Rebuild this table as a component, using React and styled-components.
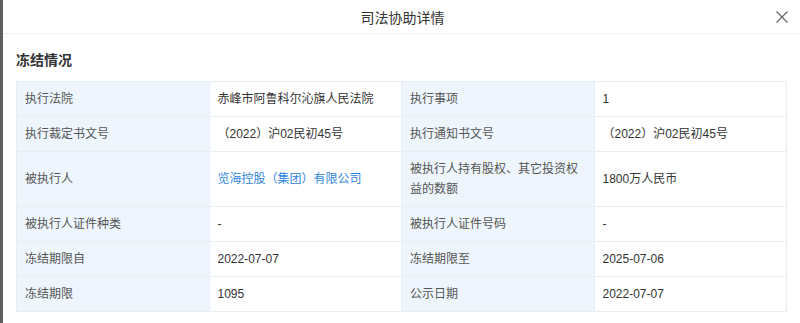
import React from "react";
import styled, { createGlobalStyle } from "styled-components";

const Global = createGlobalStyle`
  html, body { margin: 0; padding: 0; background: #fff; }
  body { font-family: "Liberation Sans", "Noto Sans CJK SC", sans-serif; }
`;

const Page = styled.div`
  display: flex;
  width: 800px;
  height: 323px;
  overflow: hidden;
  background: #fff;
`;

const Backdrop = styled.div`
  width: 3px;
  flex: none;
  background: #5e5e5e;
`;

const Modal = styled.div`
  flex: 1;
  display: flex;
  flex-direction: column;
  background: #fff;
`;

const Header = styled.div`
  position: relative;
  height: 34px;
  display: flex;
  align-items: center;
  justify-content: center;
  border-bottom: 1px solid #f0f0f0;
  box-sizing: border-box;
`;

const Title = styled.div`
  font-size: 14px;
  color: #333;
  margin-left: 2px;
`;

const Close = styled.button`
  position: absolute;
  right: 11px;
  top: 10px;
  width: 14px;
  height: 14px;
  padding: 0;
  border: 0;
  background: none;
  display: flex;
  align-items: center;
  justify-content: center;
  cursor: pointer;
`;

const Body = styled.div`
  padding: 16px 10px 0 13px;
  display: flex;
  flex-direction: column;
`;

const SectionTitle = styled.div`
  font-size: 14px;
  font-weight: bold;
  color: #333;
  line-height: 20px;
  margin-bottom: 11px;
`;

const Table = styled.table`
  width: 771px;
  border-collapse: collapse;
  table-layout: fixed;
  font-size: 12px;
`;

const Cell = styled.td`
  border: 1px solid #e9eef4;
  padding: 7px 8px;
  line-height: 20px;
  vertical-align: middle;
  background: ${(p) => (p.$label ? "#eef5fc" : "#fff")};
  color: ${(p) => (p.$label ? "#555" : p.$link ? "#2f86e0" : "#333")};
`;

const rows = [
  ["执行法院", "赤峰市阿鲁科尔沁旗人民法院", "执行事项", "1"],
  ["执行裁定书文号", "（2022）沪02民初45号", "执行通知书文号", "（2022）沪02民初45号"],
  ["被执行人", "览海控股（集团）有限公司", "被执行人持有股权、其它投资权益的数额", "1800万人民币", true],
  ["被执行人证件种类", "-", "被执行人证件号码", "-"],
  ["冻结期限自", "2022-07-07", "冻结期限至", "2025-07-06"],
  ["冻结期限", "1095", "公示日期", "2022-07-07"],
];

export default function App() {
  return (
    <>
      <Global />
      <Page>
        <Backdrop />
        <Modal>
          <Header>
            <Title>司法协助详情</Title>
            <Close aria-label="关闭">
              <svg width="14" height="14" viewBox="0 0 14 14">
                <path d="M1.5 1.5 L12.5 12.5 M12.5 1.5 L1.5 12.5" stroke="#666" strokeWidth="1.2" fill="none" />
              </svg>
            </Close>
          </Header>
          <Body>
            <SectionTitle>冻结情况</SectionTitle>
            <Table>
              <tbody>
                {rows.map((r, i) => (
                  <tr key={i}>
                    <Cell $label>{r[0]}</Cell>
                    <Cell $link={r[4]}>{r[1]}</Cell>
                    <Cell $label>{r[2]}</Cell>
                    <Cell>{r[3]}</Cell>
                  </tr>
                ))}
              </tbody>
            </Table>
          </Body>
        </Modal>
      </Page>
    </>
  );
}
